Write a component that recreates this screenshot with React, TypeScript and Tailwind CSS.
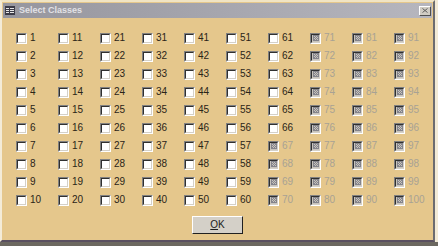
import React from "react";

const nums = Array.from({ length: 100 }, (_, i) => i + 1);

function isDisabled(n: number) {
  return n >= 67;
}

function CheckBox({ disabled }: { disabled: boolean }) {
  return (
    <span className="block h-[11px] w-[11px] flex-shrink-0 border border-t-[#808080] border-l-[#808080] border-b-white border-r-white">
      <span
        className={`flex h-full w-full items-center justify-center border border-t-[#303030] border-l-[#303030] border-b-[#d4d0c8] border-r-[#d4d0c8] ${
          disabled ? "bg-[#c8c4bc]" : "bg-white"
        }`}
      >
        {disabled && (
          <svg width="6" height="6" viewBox="0 0 6 6">
            <rect x="0" y="0" width="6" height="6" fill="#84848c" />
            <rect x="1" y="1" width="1" height="1" fill="#c8c4bc" />
            <rect x="3" y="1" width="1" height="1" fill="#c8c4bc" />
            <rect x="2" y="2" width="1" height="1" fill="#c8c4bc" />
            <rect x="4" y="2" width="1" height="1" fill="#c8c4bc" />
            <rect x="1" y="3" width="1" height="1" fill="#c8c4bc" />
            <rect x="3" y="3" width="1" height="1" fill="#c8c4bc" />
            <rect x="2" y="4" width="1" height="1" fill="#c8c4bc" />
            <rect x="4" y="4" width="1" height="1" fill="#c8c4bc" />
          </svg>
        )}
      </span>
    </span>
  );
}

export default function App() {
  return (
    <div
      className="flex h-[246px] w-[438px] flex-col overflow-hidden bg-[#f2ead6]"
      style={{ fontFamily: '"Liberation Sans", Arial, sans-serif' }}
    >
      <div className="flex h-[242px] w-[435px] flex-col border-2 border-t-[#f0e4c4] border-l-[#f4ecd8] border-r-[#6c6c70] border-b-[#5a5060] bg-[#e5c78c] pt-px">
        {/* title bar */}
        <div className="mx-px flex h-[15px] items-center bg-gradient-to-r from-[#96969e] to-[#b6b6be] pl-[2px] pr-[1px]">
          <svg width="10" height="9" viewBox="0 0 10 9" className="flex-shrink-0">
            <rect x="0" y="0" width="10" height="9" fill="#3c3c48" />
            <rect x="1" y="2" width="3" height="1" fill="#e8e8e8" />
            <rect x="1" y="4" width="3" height="1" fill="#e8e8e8" />
            <rect x="1" y="6" width="3" height="1" fill="#e8e8e8" />
            <rect x="5" y="2" width="4" height="1" fill="#e8e8e8" />
            <rect x="5" y="4" width="4" height="1" fill="#e8e8e8" />
            <rect x="5" y="6" width="4" height="1" fill="#e8e8e8" />
          </svg>
          <span className="ml-[4px] text-[9px] font-bold leading-none text-[#e2e2e6]">
            Select Classes
          </span>
          <div className="ml-auto flex h-[10px] w-[12px] items-center justify-center border border-t-white border-l-white border-b-[#505050] border-r-[#505050] bg-[#d0ccc4]">
            <svg width="6" height="5" viewBox="0 0 6 5">
              <path d="M0.5 0.5 L5.5 4.5 M5.5 0.5 L0.5 4.5" stroke="#606060" strokeWidth="1" />
            </svg>
          </div>
        </div>

        {/* checkbox grid */}
        <div className="grid grid-flow-col grid-cols-[repeat(10,42px)] grid-rows-[repeat(10,18px)] pl-[14px] pt-[11px]">
          {nums.map((n) => {
            const off = isDisabled(n);
            return (
              <div key={n} className="flex items-center">
                <CheckBox disabled={off} />
                <span
                  className={`ml-[3px] text-[10px] leading-none ${
                    off ? "text-[#a8a294]" : "text-[#2a2418]"
                  }`}
                >
                  {n}
                </span>
              </div>
            );
          })}
        </div>

        <div className="mt-[7px] flex justify-center">
          <button className="flex h-[18px] w-[51px] items-center justify-center border border-t-white border-l-white border-b-[#202020] border-r-[#202020] bg-[#d4d0c8] text-[10px] leading-none text-[#202020]">
            <span>
              <span className="underline">O</span>K
            </span>
          </button>
        </div>
      </div>
      <div className="h-[4px] w-full bg-[#6c6860]" />
    </div>
  );
}
